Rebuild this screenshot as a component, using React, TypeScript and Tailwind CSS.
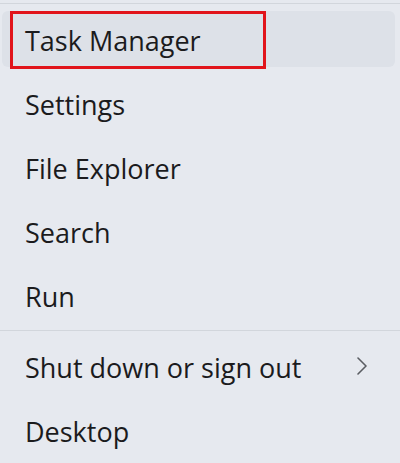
import React from 'react';

const items = ['Task Manager', 'Settings', 'File Explorer', 'Search', 'Run'];

function Chevron() {
  return (
    <svg width="12" height="18" viewBox="0 0 12 18" fill="none">
      <polyline points="2,1 10,9 2,17" stroke="#5a5d62" strokeWidth="1.6" strokeLinecap="round" strokeLinejoin="round" />
    </svg>
  );
}

function Row({ label, active, chevron }: { label: string; active?: boolean; chevron?: boolean }) {
  return (
    <div className={`relative mx-[2px] mr-[5px] flex h-[56px] items-center justify-between rounded-[6px] pl-[23px] pr-[27px] ${active ? 'bg-[#dde1e8]' : ''}`}>
      <span className="pt-[3px] text-[27px] leading-none text-[#1b1b1d]">{label}</span>
      {chevron && <Chevron />}
      {active && <div className="absolute left-[8px] top-0 h-[58px] w-[256px] border-[3px] border-[#e1141b]" />}
    </div>
  );
}

export default function App() {
  return (
    <div className="h-[463px] w-[400px] overflow-hidden bg-[#e6e9ef] pt-[3px]" style={{ fontFamily: '"Open Sans", sans-serif' }}>
      <div className="border-t border-[#d2d6dc] pt-[7px]">
        <div className="flex flex-col gap-[8px]">
          {items.map((label, i) => (
            <Row key={label} label={label} active={i === 0} />
          ))}
        </div>
      </div>
      <div className="mt-[7px] border-t border-[#d2d6dc] pt-[7px]">
        <div className="flex flex-col gap-[8px]">
          <Row label="Shut down or sign out" chevron />
          <Row label="Desktop" />
        </div>
      </div>
    </div>
  );
}
